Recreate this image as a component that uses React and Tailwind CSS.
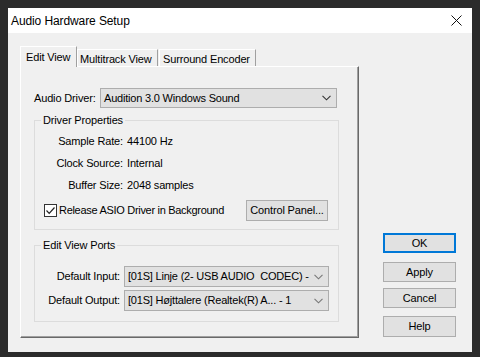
import React from 'react';

const font = { fontFamily: '"Liberation Sans", Arial, sans-serif' };

function Chevron({ color = '#333' }) {
    return (
        <svg width="9" height="6" viewBox="0 0 9 6" className="shrink-0">
            <path d="M0.5 0.8 L4.5 4.8 L8.5 0.8" fill="none" stroke={color} strokeWidth="1.1" />
        </svg>
    );
}

function Select({ value, width, chevron }) {
    return (
        <div
            className="flex items-center justify-between h-full bg-[#e1e1e1] border border-[#adadad] pl-[3px] pr-[5px] text-[11px] text-black"
            style={{ width }}
        >
            <span className="whitespace-pre tracking-[-0.2px]">{value}</span>
            <Chevron color={chevron} />
        </div>
    );
}

function Button({ children, primary, className = '' }) {
    return (
        <div
            className={`flex items-center justify-center bg-[#e1e1e1] text-[11px] text-black ${primary ? 'border-2 border-[#0078d7]' : 'border border-[#adadad]'} ${className}`}
        >
            {children}
        </div>
    );
}

function Group({ label, className = '', children }) {
    return (
        <div className={`relative border border-[#dcdcdc] ${className}`}>
            <span className="absolute left-[6px] top-[-8px] bg-[#f0f0f0] px-[2px] text-[11px] leading-[14px]">{label}</span>
            {children}
        </div>
    );
}

export default function App() {
    return (
        <div className="w-[480px] h-[357px] bg-[#2b2b2b] pt-[8px] pl-[8px]" style={font}>
            <div className="w-[464px] h-[344px] bg-[#f0f0f0] flex flex-col text-black">
                {/* Title bar */}
                <div className="h-[25px] bg-white flex items-center justify-between pl-[3px] pr-[10px]">
                    <span className="text-[12px] tracking-[-0.1px]">Audio Hardware Setup</span>
                    <svg width="11" height="11" viewBox="0 0 11 11">
                        <path d="M0.5 0.5 L10.5 10.5 M10.5 0.5 L0.5 10.5" stroke="#111" strokeWidth="1" />
                    </svg>
                </div>

                <div className="flex pl-[12px] pt-[13px] tracking-[-0.15px]">
                    {/* Tabs + panel */}
                    <div className="w-[339px] flex flex-col">
                        <div className="h-[20px] flex items-end text-[11px]">
                            <div className="relative z-10 w-[57px] h-[21px] -mb-[1px] bg-[#f0f0f0] border-l border-t border-white border-r border-r-[#a0a0a0] pl-[5px] pt-[2px]">
                                Edit View
                            </div>
                            <div className="w-[81px] h-[17px] border-l border-t border-white border-r border-r-[#a0a0a0] pl-[2px] pt-[1px]">
                                Multitrack View
                            </div>
                            <div className="w-[97px] h-[17px] ml-[1px] border-l border-t border-white border-r border-r-[#a0a0a0] pl-[3px] pt-[1px]">
                                Surround Encoder
                            </div>
                        </div>
                        <div className="h-[272px] border-l border-t border-white border-r border-b border-r-[#696969] border-b-[#696969] shadow-[inset_-1px_-1px_0_#a0a0a0] pl-[13px] pt-[21px] text-[11px]">
                            <div className="h-[20px] flex items-center">
                                <span className="w-[66px]">Audio Driver:</span>
                                <Select value="Audition 3.0 Windows Sound" width={237} chevron="#333" />
                            </div>

                            <Group label="Driver Properties" className="mt-[12px] w-[305px] h-[110px] pt-[9px]">
                                <div className="flex flex-col">
                                    {[
                                        ['Sample Rate:', '44100 Hz'],
                                        ['Clock Source:', 'Internal'],
                                        ['Buffer Size:', '2048 samples'],
                                    ].map(([k, v]) => (
                                        <div key={k} className="h-[22px] flex items-center">
                                            <span className="w-[88px] text-right">{k}</span>
                                            <span className="ml-[4px]">{v}</span>
                                        </div>
                                    ))}
                                    <div className="h-[21px] mt-[4px] flex items-center pl-[9px] pr-[10px]">
                                        <div className="w-[13px] h-[13px] bg-white border border-[#333] flex items-center justify-center">
                                            <svg width="11" height="11" viewBox="0 0 11 11">
                                                <path d="M1.5 5.5 L4.2 8.3 L9.5 2.5" fill="none" stroke="#222" strokeWidth="1.2" />
                                            </svg>
                                        </div>
                                        <span className="ml-[2px] tracking-[-0.3px]">Release ASIO Driver in Background</span>
                                        <Button className="ml-auto w-[82px] h-[21px]">Control Panel...</Button>
                                    </div>
                                </div>
                            </Group>

                            <Group label="Edit View Ports" className="mt-[15px] w-[305px] h-[77px] pt-[20px]">
                                <div className="flex flex-col gap-[3px]">
                                    <div className="h-[21px] flex items-center">
                                        <span className="w-[85px] text-right">Default Input:</span>
                                        <div className="ml-[4px] h-full">
                                            <Select value="[01S] Linje (2- USB AUDIO  CODEC) -" width={205} chevron="#777" />
                                        </div>
                                    </div>
                                    <div className="h-[21px] flex items-center">
                                        <span className="w-[85px] text-right">Default Output:</span>
                                        <div className="ml-[4px] h-full">
                                            <Select value="[01S] Højttalere (Realtek(R) A... - 1" width={205} chevron="#777" />
                                        </div>
                                    </div>
                                </div>
                            </Group>
                        </div>
                    </div>

                    {/* Buttons */}
                    <div className="ml-[24px] pt-[187px] flex flex-col">
                        <Button primary className="w-[73px] h-[20px]">OK</Button>
                        <Button className="w-[73px] h-[20px] mt-[9px]">Apply</Button>
                        <Button className="w-[73px] h-[20px] mt-[6px]">Cancel</Button>
                        <Button className="w-[73px] h-[21px] mt-[8px]">Help</Button>
                    </div>
                </div>
            </div>
        </div>
    );
}
